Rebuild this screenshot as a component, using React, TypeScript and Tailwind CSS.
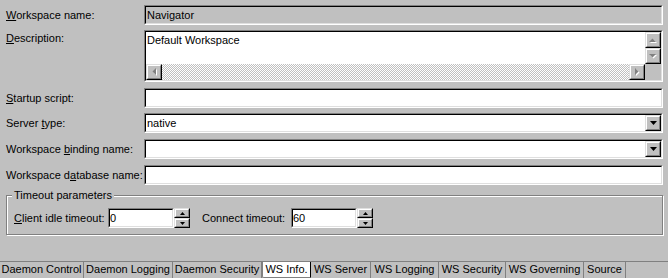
import React from 'react';

type BoxProps = {
  className?: string;
  inner?: string;
  children?: React.ReactNode;
};

// Win95 style sunken edit frame
const Sunken: React.FC<BoxProps> = ({ className = '', inner = '', children }) => (
  <div className={`border border-t-[#808080] border-l-[#808080] border-r-white border-b-white ${className}`}>
    <div className={`h-full border border-t-black border-l-black border-r-[#dfdfdf] border-b-[#dfdfdf] ${inner}`}>
      {children}
    </div>
  </div>
);

// raised button (scroll arrows, combo button, spinners)
const Raised: React.FC<BoxProps> = ({ className = '', children }) => (
  <div className={`bg-[#c0c0c0] border border-t-[#dfdfdf] border-l-[#dfdfdf] border-r-black border-b-black ${className}`}>
    <div className="h-full w-full flex items-center justify-center border border-t-white border-l-white border-r-[#808080] border-b-[#808080]">
      {children}
    </div>
  </div>
);

type Dir = 'up' | 'down' | 'left' | 'right';

const trianglePoints: Record<Dir, string> = {
  up: '0,4 3.5,0.5 7,4',
  down: '0,0 7,0 3.5,3.5',
  left: '4,0 4,7 0.5,3.5',
  right: '0,0 0,7 3.5,3.5',
};

// greyed-out arrow with white emboss, as on a disabled scrollbar
const DisabledArrow = ({ dir }: { dir: Dir }) => {
  const vertical = dir === 'up' || dir === 'down';
  const w = vertical ? 8 : 5;
  const h = vertical ? 5 : 8;
  return (
    <svg width={w} height={h} viewBox={`0 0 ${w} ${h}`} className="block">
      <polygon points={trianglePoints[dir]} fill="#ffffff" transform="translate(1,1)" />
      <polygon points={trianglePoints[dir]} fill="#808080" />
    </svg>
  );
};

const ComboArrow = () => (
  <svg width="7" height="4" viewBox="0 0 7 4" className="block">
    <polygon points="0,0 7,0 3.5,4" fill="#000" />
  </svg>
);

const SpinArrow = ({ up }: { up?: boolean }) => (
  <svg width="5" height="3" viewBox="0 0 5 3" className="block">
    <polygon points={up ? '0,3 5,3 2.5,0' : '0,0 5,0 2.5,3'} fill="#000" />
  </svg>
);

const Label = ({ children, className = '' }: { children: React.ReactNode; className?: string }) => (
  <div className={`w-[138px] shrink-0 leading-[13px] ${className}`}>{children}</div>
);

const ComboField = ({ value }: { value?: string }) => (
  <Sunken className="flex-1 h-[20px]" inner="bg-white flex">
    <div className="flex-1 pl-[1px] leading-[16px]">{value}</div>
    <Raised className="w-[16px] h-[16px]">
      <ComboArrow />
    </Raised>
  </Sunken>
);

const SpinField = ({ value }: { value: string }) => (
  <div className="flex">
    <Sunken className="w-[66px] h-[20px]" inner="bg-white">
      <div className="leading-[16px]">{value}</div>
    </Sunken>
    <div className="flex flex-col w-[16px] h-[20px]">
      <Raised className="h-[10px] w-[16px]">
        <SpinArrow up />
      </Raised>
      <Raised className="h-[10px] w-[16px]">
        <SpinArrow />
      </Raised>
    </div>
  </div>
);

const tabs = [
  { name: 'Daemon Control', w: 'w-[84px]' },
  { name: 'Daemon Logging', w: 'w-[89px]' },
  { name: 'Daemon Security', w: 'w-[89px]' },
  { name: 'WS Info.', w: 'w-[49px]', active: true },
  { name: 'WS Server', w: 'w-[60px]' },
  { name: 'WS Logging', w: 'w-[68px]' },
  { name: 'WS Security', w: 'w-[67px]' },
  { name: 'WS Governing', w: 'w-[78px]' },
  { name: 'Source', w: 'w-[42px]' },
];

export default function App() {
  return (
    <div className="w-[668px] h-[278px] bg-[#c0c0c0] overflow-hidden flex flex-col text-black text-[11px] font-['Liberation_Sans',Arial,sans-serif]">
      {/* Workspace name */}
      <div className="flex items-center pl-[6px] pr-[5px] mt-[5px]">
        <Label>
          <u>W</u>orkspace name:
        </Label>
        <Sunken className="flex-1 h-[20px]" inner="bg-[#c0c0c0]">
          <div className="pl-[1px] leading-[16px]">Navigator</div>
        </Sunken>
      </div>

      {/* Description */}
      <div className="flex items-start pl-[6px] pr-[5px] mt-[5px]">
        <Label className="pt-[2px]">
          <u>D</u>escription:
        </Label>
        <Sunken className="flex-1 h-[52px]" inner="bg-white grid grid-cols-[1fr_16px] grid-rows-[32px_16px]">
          <div className="pl-[1px] pt-[2px] leading-[13px]">Default Workspace</div>
          <div className="flex flex-col">
            <Raised className="w-[16px] h-[16px]">
              <DisabledArrow dir="up" />
            </Raised>
            <Raised className="w-[16px] h-[16px]">
              <DisabledArrow dir="down" />
            </Raised>
          </div>
          <div className="flex">
            <Raised className="w-[16px] h-[16px]">
              <DisabledArrow dir="left" />
            </Raised>
            <div className="flex-1 bg-[repeating-conic-gradient(#c0c0c0_0%_25%,#ffffff_0%_50%)] bg-[length:2px_2px]" />
            <Raised className="w-[16px] h-[16px]">
              <DisabledArrow dir="right" />
            </Raised>
          </div>
          <div className="bg-[#c0c0c0]" />
        </Sunken>
      </div>

      {/* Startup script */}
      <div className="flex items-center pl-[6px] pr-[5px] mt-[6px]">
        <Label>
          <u>S</u>tartup script:
        </Label>
        <Sunken className="flex-1 h-[20px]" inner="bg-white" />
      </div>

      {/* Server type */}
      <div className="flex items-center pl-[6px] pr-[5px] mt-[5px]">
        <Label>
          Server <u>t</u>ype:
        </Label>
        <ComboField value="native" />
      </div>

      {/* Binding */}
      <div className="flex items-center pl-[6px] pr-[5px] mt-[6px]">
        <Label>
          Workspace <u>b</u>inding name:
        </Label>
        <ComboField />
      </div>

      {/* Database */}
      <div className="flex items-center pl-[6px] pr-[5px] mt-[6px]">
        <Label>
          Workspace d<u>a</u>tabase name:
        </Label>
        <Sunken className="flex-1 h-[20px]" inner="bg-white" />
      </div>

      {/* Timeout group */}
      <div className="relative ml-[6px] mr-[5px] mt-[10px] h-[40px] border border-[#808080] shadow-[inset_1px_1px_0_#ffffff,1px_1px_0_#ffffff]">
        <div className="absolute left-[5px] top-[-7px] px-[2px] bg-[#c0c0c0] leading-[13px]">Timeout parameters</div>
        <div className="flex items-center pl-[7px] pt-[12px]">
          <div className="w-[94px] leading-[13px]">
            <u>C</u>lient idle timeout:
          </div>
          <SpinField value="0" />
          <div className="ml-[12px] w-[89px] leading-[13px]">Connect timeout:</div>
          <SpinField value="60" />
        </div>
      </div>

      {/* Tabs */}
      <div className="mt-auto h-[17px] border-t border-[#808080] flex">
        {tabs.map((t) => (
          <div
            key={t.name}
            className={`${t.w} shrink-0 h-[16px] leading-[15px] text-center whitespace-nowrap ${
              t.active
                ? 'bg-white border-l border-l-[#808080] border-r border-r-black border-b border-b-[#808080] rounded-bl-[2px]'
                : 'border-r border-r-[#808080]'
            }`}
          >
            {t.name}
          </div>
        ))}
      </div>
    </div>
  );
}
